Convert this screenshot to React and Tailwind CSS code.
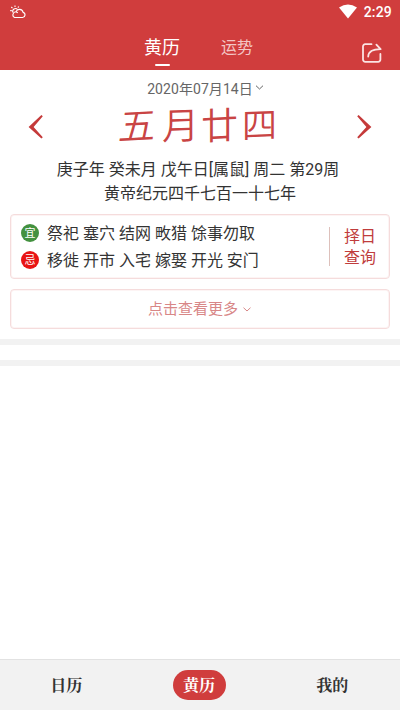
import React from 'react';

const luckRows = [
    { mark: '宜', color: 'bg-[#43913f]', text: '祭祀 塞穴 结网 畋猎 馀事勿取' },
    { mark: '忌', color: 'bg-[#e81414]', text: '移徙 开市 入宅 嫁娶 开光 安门' },
];

function StatusBar() {
    return (
        <div className="h-6 flex items-center justify-between pl-[10px] pr-2">
            <svg width="16" height="14" viewBox="0 0 16 14" fill="none" stroke="white" strokeWidth="1.1">
                <path d="M4.6 12.5h8a2.6 2.6 0 0 0 .5-5.1A3.7 3.7 0 0 0 6 6.8 3 3 0 0 0 4.6 12.5Z" />
                <path d="M3 7.6A2.8 2.8 0 0 1 7.6 4.5M5 .5v1.5M1.3 2l1.2 1.1M.2 5.6h1.6M8.8 1.5l-.9 1.2M6 6.8l1.8 1" />
            </svg>
            <div className="flex items-center">
                <svg width="18" height="15" viewBox="0 0 18 15" className="mr-[7px] -mt-[2px]">
                    <path d="M0 3.6Q9-2.6 18 3.6L9 14.5Z" fill="white" />
                </svg>
                <span className="text-[14px] leading-6 font-medium tracking-[0.2px]">2:29</span>
            </div>
        </div>
    );
}

function TopTabs() {
    return (
        <div className="h-[46px] grid grid-cols-[1fr_auto_1fr] items-start">
            <div />
            <div className="flex items-start gap-[41px] pl-[4px] pr-[7px]">
                <div className="flex flex-col items-center pt-[10px]">
                    <span className="text-[18px] leading-7">黄历</span>
                    <span className="mt-[2px] ml-[1px] w-[15px] h-[2px] rounded-full bg-white" />
                </div>
                <span className="pt-[10px] text-[16px] leading-7 text-[#f3c6c6]">运势</span>
            </div>
            <button className="justify-self-end mt-[19px] mr-[18px]">
                <svg width="20" height="20" viewBox="0 0 20 20" fill="none" stroke="#fbe4e4" strokeWidth="1.8" strokeLinecap="round" strokeLinejoin="round">
                    <path d="M9.5 1.2H3.2A2.2 2.2 0 0 0 1 3.4v13.2a2.2 2.2 0 0 0 2.2 2.2h13a2.2 2.2 0 0 0 2.2-2.2V11" />
                    <path d="M6.2 13.5C6.5 9 9.5 6.2 18.6 6.2L14.4 1.6" />
                </svg>
            </button>
        </div>
    );
}

function Chevron({ width, height, className }) {
    return (
        <svg width={width} height={height} viewBox="0 0 8 5" fill="none" stroke="currentColor" strokeWidth="1" className={className}>
            <path d="M.5.7 4 4 7.5.7" />
        </svg>
    );
}

export default function App() {
    return (
        <div className="w-[400px] h-[710px] flex flex-col overflow-hidden bg-white text-[#333] font-[Roboto,'Noto_Sans_CJK_SC',sans-serif]">
            <header className="h-[70px] shrink-0 bg-[#d03d3d] text-white">
                <StatusBar />
                <TopTabs />
            </header>

            {/* Date */}
            <section className="h-[269px] shrink-0 px-[10px]">
                <div className="h-9 pt-[9px] flex justify-center pl-[11px]">
                    <span className="text-[14px] leading-5 tracking-[0.06px] text-[#666]">2020年07月14日</span>
                    <Chevron width="9" height="5" className="mt-[6px] ml-[2px] text-[#666]" />
                </div>
                <div className="h-[42px] flex items-center justify-between px-[18px] text-[#c53a3a]">
                    <svg width="15" height="24" viewBox="0 0 15 24" className="-mt-[1px]">
                        <path d="M13.4 0 14.8 1.2 5.6 12 14.8 22.2 13.4 23.6 .6 12Z" fill="currentColor" />
                    </svg>
                    <div className="flex items-center pr-[4px] text-[37px] leading-[42px] font-[350] text-[#c94444]">
                        <span className="w-[43px] -skew-x-6 -skew-y-3">五</span>
                        <span className="w-[39px] -skew-y-2">月</span>
                        <span className="w-[41px] -skew-y-3">廿</span>
                        <span className="w-[35px] text-[35px] -skew-y-2">四</span>
                    </div>
                    <svg width="15" height="24" viewBox="0 0 15 24" className="-mt-[1px]">
                        <path d="M1.6 0 .2 1.2 9.4 12 .2 22.2 1.6 23.6 14.4 12Z" fill="currentColor" />
                    </svg>
                </div>
                <div className="pt-[10px] text-center text-[16px] leading-6">
                    <p className="pr-[4px]">庚子年 癸未月 戊午日[属鼠] 周二 第29周</p>
                    <p>黄帝纪元四千七百一十七年</p>
                </div>

                {/* Luck of the day */}
                <div className="mt-[8px] h-[65px] flex items-center border-[1.5px] border-[#f5dcdc] rounded-[4px] shadow-[inset_0_0_0_1px_#fdf4f4]">
                    <div className="flex-1 pl-[10px]">
                        {luckRows.map((row) => (
                            <div key={row.mark} className="h-[27px] flex items-center">
                                <span className={`size-[18px] rounded-full flex items-center justify-center text-white text-[11px] leading-none ${row.color}`}>
                                    {row.mark}
                                </span>
                                <span className="ml-2 pt-[1px] text-[16px] leading-[27px] whitespace-nowrap">{row.text}</span>
                            </div>
                        ))}
                    </div>
                    <div className="w-[60px] h-[39px] flex items-center border-l border-[#ddc0bb] pl-[14px]">
                        <span className="w-8 pt-[1px] text-[16px] leading-[21px] text-[#c03c3c]">择日查询</span>
                    </div>
                </div>

                <button className="mt-[10px] w-full h-10 flex items-center justify-center border-[1.5px] border-[#f5dcdc] rounded-[4px] shadow-[inset_0_0_0_1px_#fdf4f4] text-[#d88787]">
                    <span className="text-[15px] leading-5">点击查看更多</span>
                    <Chevron width="10" height="5" className="ml-[4px]" />
                </button>
            </section>

            <div className="h-[6px] shrink-0 bg-[#f2f2f2]" />
            <div className="h-[15px] shrink-0" />
            <div className="h-[6px] shrink-0 bg-[#f2f2f2]" />
            <main className="flex-1" />

            <nav className="h-[51px] shrink-0 grid grid-cols-3 place-items-center border-t border-[#e2e2e2] bg-[#f2f2f2] text-[16px] font-bold font-['Noto_Serif_CJK_SC','Noto_Sans_CJK_SC',serif]">
                <span className="pr-[1px]">日历</span>
                <span className="w-[53px] h-[30px] pr-[2px] flex items-center justify-center rounded-full bg-[#d03d3d] text-white">黄历</span>
                <span className="pr-[2px]">我的</span>
            </nav>
        </div>
    );
}
